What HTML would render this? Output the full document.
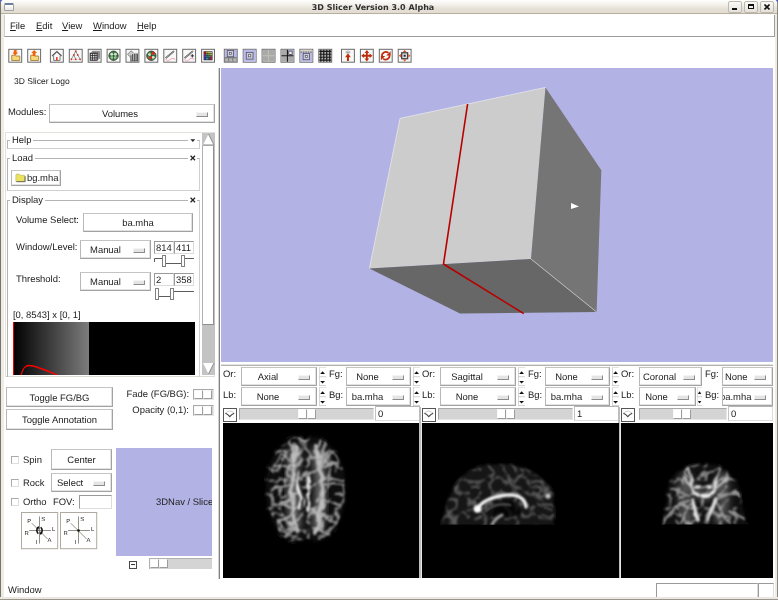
<!DOCTYPE html><html><head><meta charset="utf-8"><title>3D Slicer Version 3.0 Alpha</title><style>
*{box-sizing:border-box;margin:0;padding:0}
html,body{width:778px;height:600px;overflow:hidden;background:#fff}
body{font-family:"Liberation Sans",sans-serif;font-size:9.45px;color:#1a1a1a;position:relative;text-rendering:geometricPrecision}
.a{position:absolute}
.t{position:absolute;white-space:nowrap;line-height:12px;margin-top:1px}
.btn{position:absolute;background:#fff;border:1px solid #c4c4c4;border-left-color:#b8b8b8;border-right-color:#a2a2a2;border-bottom-color:#a2a2a2;box-shadow:inset -1px -1px 0 #e2e2e2;text-align:center;white-space:nowrap;overflow:hidden;padding-top:1px}
.ind{position:absolute;width:12px;height:5px;background:#e4e4e4;border:1px solid #f4f4f4;border-right-color:#8c8c8c;border-bottom-color:#8c8c8c}
.ent{position:absolute;background:#fff;border:1px solid #9a9a9a;border-right-color:#dcdcdc;border-bottom-color:#dcdcdc;white-space:nowrap;overflow:hidden;padding-top:1px}
.tb{position:absolute;top:49px;width:14px;height:14px;border:1px solid #666;background:#f4f4f4;overflow:hidden}
.trough{position:absolute;background:#d4d4d4;border:1px solid #a8a8a8;border-right-color:#e6e6e6;border-bottom-color:#e6e6e6}
.thumb{position:absolute;background:#fff;border:1px solid #f8f8f8;border-right-color:#9c9c9c;border-bottom-color:#9c9c9c}
.lf{position:absolute;border:1px solid #b4b4b4;border-right-color:#d0d0d0;border-bottom-color:#d0d0d0}
.lfl{position:absolute;background:#fff;padding:1px 2px 0;line-height:12px}
.cb{position:absolute;width:8px;height:8px;background:#fff;border:1px solid #aaa;border-right-color:#dedede;border-bottom-color:#dedede}
</style></head><body><div id="root" style="position:absolute;left:0;top:0;width:778px;height:600px;will-change:transform">
<div class="a" style="left:0;top:0;width:778px;height:14px;background:linear-gradient(#fefefd 0,#f4f1ec 35%,#e7e2d9 62%,#e1dbd0 100%);border-bottom:1px solid #b7ae9f"></div>
<div class="a" style="left:0;top:0;width:1px;height:600px;background:#77756f"></div>
<div class="a" style="left:1px;top:14px;width:3px;height:586px;background:#efebe5"></div>
<div class="a" style="left:775px;top:14px;width:3px;height:586px;background:#efebe5"></div>
<div class="a" style="left:777px;top:0;width:1px;height:600px;background:#8a877f"></div>
<div class="a" style="left:0;top:597px;width:778px;height:3px;background:#ece8e1"></div>
<div class="a" style="left:0;top:599px;width:778px;height:1px;background:#9a968d"></div>
<svg class="a" style="left:0;top:0" width="778" height="4"><path d="M0 0h2.400L0 3z" fill="#5a66c6"/><path d="M778 0h-2.400L778 3z" fill="#5a66c6"/></svg>
<div class="t" style="left:0;width:746px;top:0.5px;text-align:center;font-family:'DejaVu Sans',sans-serif;font-weight:bold;font-size:8px;letter-spacing:0;color:#303030">3D Slicer Version 3.0 Alpha</div>
<div class="a" style="left:4px;top:3px;width:10px;height:8px;border:1px solid #a2a2a2;border-top:2px solid #6a7f9c;background:linear-gradient(#fff,#e8e8e8);border-radius:1.500px"></div>
<div class="a" style="left:728px;top:1px;width:14px;height:12px;border:1px solid #bdb8ad;border-radius:2px;background:linear-gradient(#fbfaf8,#e6e2da)"></div>
<div class="a" style="left:744px;top:1px;width:14px;height:12px;border:1px solid #bdb8ad;border-radius:2px;background:linear-gradient(#fbfaf8,#e6e2da)"></div>
<div class="a" style="left:760px;top:1px;width:14px;height:12px;border:1px solid #bdb8ad;border-radius:2px;background:linear-gradient(#fbfaf8,#e6e2da)"></div>
<div class="a" style="left:732px;top:8px;width:5px;height:2px;background:#111"></div>
<div class="a" style="left:748px;top:4px;width:6px;height:5px;border:1px solid #111;border-top-width:2px"></div>
<svg class="a" style="left:764px;top:4px" width="6" height="6" viewBox="0 0 6 6"><path d="M0.5 0.5L5.5 5.5M5.5 0.5L0.5 5.5" stroke="#111" stroke-width="1.6"/></svg>
<div class="a" style="left:4px;top:15px;width:771px;height:22px;background:#fff;border-left:1px solid #d0d0d0;border-right:1px solid #9c9c9c;border-bottom:1px solid #9c9c9c"></div>
<div class="t" style="left:10px;top:20px"><u>F</u>ile</div>
<div class="t" style="left:36px;top:20px"><u>E</u>dit</div>
<div class="t" style="left:62px;top:20px"><u>V</u>iew</div>
<div class="t" style="left:93px;top:20px"><u>W</u>indow</div>
<div class="t" style="left:137px;top:20px"><u>H</u>elp</div>
<svg class="a" style="left:0;top:44px" width="420" height="24" viewBox="0 0 420 24"><g transform="translate(8.30,4.8)"><rect x=".5" y=".5" width="12.900" height="12.900" fill="#f8f8f8" stroke="#6a6a6a" stroke-width="1"/><g transform="translate(1,1) scale(0.992)"><path d="M2.500 5.500h3l.8.800h4.200v4.500h-8z" fill="#f6d87c" stroke="#b08a3c" stroke-width="1"/><path d="M4.600 0.300h2.800v2.500h1.400L6 5.900 3.200 2.800h1.400z" fill="#f0640c"/></g></g><g transform="translate(27.20,4.8)"><rect x=".5" y=".5" width="12.900" height="12.900" fill="#f8f8f8" stroke="#6a6a6a" stroke-width="1"/><g transform="translate(1,1) scale(0.992)"><path d="M2.500 5.500h3l.8.800h4.200v4.500h-8z" fill="#f6d87c" stroke="#b08a3c" stroke-width="1"/><path d="M6 0.200L8.900 3.300H7.400v3H4.600v-3H3.100z" fill="#f0640c"/></g></g><g transform="translate(49.90,4.8)"><rect x=".5" y=".5" width="12.900" height="12.900" fill="#f8f8f8" stroke="#6a6a6a" stroke-width="1"/><g transform="translate(1,1) scale(0.992)"><path d="M1.300 6.200L6 1.800l4.700 4.400" stroke="#555" stroke-width="1.300" fill="none"/><path d="M2.800 6v4.700h6.400V6" stroke="#777" stroke-width="1" fill="#fff"/><rect x="5.200" y="7.300" width="1.600" height="3.400" fill="#e8381c"/></g></g><g transform="translate(68.80,4.8)"><rect x=".5" y=".5" width="12.900" height="12.900" fill="#f8f8f8" stroke="#6a6a6a" stroke-width="1"/><g transform="translate(1,1) scale(0.992)"><path d="M6 1.400L4 5.200M6 1.400l2 3.800M4 5.200L1.600 9.400M4 5.200l2 4.200M8 5.200l2.400 4.200" stroke="#666" stroke-width=".7"/><path d="M1.600 9.600h8.800" stroke="#c8382a" stroke-width=".5" stroke-dasharray=".8 .8"/><circle cx="6" cy="1.4" r=".9" fill="#c8382a"/><circle cx="4" cy="5.2" r=".9" fill="#c8382a"/><circle cx="8" cy="5.2" r=".9" fill="#c8382a"/><circle cx="1.6" cy="9.6" r=".9" fill="#c8382a"/><circle cx="6" cy="9.6" r=".9" fill="#c8382a"/><circle cx="10.4" cy="9.6" r=".9" fill="#c8382a"/></g></g><g transform="translate(87.70,4.8)"><rect x=".5" y=".5" width="12.900" height="12.900" fill="#f8f8f8" stroke="#6a6a6a" stroke-width="1"/><g transform="translate(1,1) scale(0.992)"><path d="M3.500 1h8v8l-3 1.500v-6.500h-6.500z" fill="#9a9a9a"/><path d="M5 1.500v2M7 1.500v2M9 1.500v2M10.500 3v5" stroke="#666" stroke-width=".6"/><rect x="1.500" y="3.500" width="7" height="7" fill="#e8e8e8" stroke="#222" stroke-width="1"/><path d="M3.800 3.500v7M6.200 3.500v7M1.500 5.800h7M1.500 8.200h7" stroke="#222" stroke-width=".8"/></g></g><g transform="translate(106.60,4.8)"><rect x=".5" y=".5" width="12.900" height="12.900" fill="#f8f8f8" stroke="#6a6a6a" stroke-width="1"/><g transform="translate(1,1) scale(0.992)"><circle cx="6" cy="6" r="4.700" fill="#4f8f4f" stroke="#3a3a3a" stroke-width=".9"/><path d="M1.500 6h9M6 1.500v9" stroke="#2a4a2a" stroke-width=".7"/><circle cx="4.200" cy="4.600" r="1.500" fill="#cfe6cf"/><circle cx="7.800" cy="4.600" r="1.500" fill="#cfe6cf"/><circle cx="4.400" cy="7.800" r="1.200" fill="#9cc69c"/><circle cx="7.600" cy="7.800" r="1.200" fill="#9cc69c"/></g></g><g transform="translate(125.50,4.8)"><rect x=".5" y=".5" width="12.900" height="12.900" fill="#f8f8f8" stroke="#6a6a6a" stroke-width="1"/><g transform="translate(1,1) scale(0.992)"><path d="M1 4.500L4.500 1l3 2.500-3.500 4z" fill="#c8c8c8" stroke="#666" stroke-width=".7"/><path d="M3 7l3.500-4h4.500v8.500h-6z" fill="#dcdcdc"/><path d="M4.500 5.500v5.500M6.200 4.200v7M7.900 3.800v7.400M9.600 3.800v7.400M11 3.800v7.400" stroke="#3c3c3c" stroke-width=".95"/><path d="M3.500 11.300h8" stroke="#3c3c3c" stroke-width=".8"/></g></g><g transform="translate(144.40,4.8)"><rect x=".5" y=".5" width="12.900" height="12.900" fill="#f8f8f8" stroke="#6a6a6a" stroke-width="1"/><g transform="translate(1,1) scale(0.992)"><circle cx="6" cy="6" r="4.700" fill="#4f8f4f" stroke="#3a3a3a" stroke-width=".9"/><path d="M1.500 6h9M6 1.500v9" stroke="#2a4a2a" stroke-width=".7"/><circle cx="4.200" cy="4.800" r="1.400" fill="#cfe6cf"/><circle cx="7.800" cy="7.600" r="1.400" fill="#cfe6cf"/><circle cx="7.900" cy="3.600" r="1.500" fill="#ee1c1c"/><circle cx="5" cy="8" r="1.500" fill="#ee1c1c"/></g></g><g transform="translate(163.30,4.8)"><rect x=".5" y=".5" width="12.900" height="12.900" fill="#f8f8f8" stroke="#6a6a6a" stroke-width="1"/><g transform="translate(1,1) scale(0.992)"><path d="M1.400 8.300L9.800 1.400" stroke="#4a4a4a" stroke-width="1.700"/><path d="M1.700 8.100L9.600 1.600" stroke="#dcdcdc" stroke-width=".6"/><path d="M1.500 9.500c1.500 2.500 3 2 4.500 0.300s3-1 5 -0.300" stroke="#f08aa0" stroke-width=".9" fill="none"/></g></g><g transform="translate(182.20,4.8)"><rect x=".5" y=".5" width="12.900" height="12.900" fill="#f8f8f8" stroke="#6a6a6a" stroke-width="1"/><g transform="translate(1,1) scale(0.992)"><path d="M1.400 8.300L9.800 1.400" stroke="#4a4a4a" stroke-width="1.700"/><path d="M1.700 8.100L9.600 1.600" stroke="#dcdcdc" stroke-width=".6"/><path d="M1.500 9.500c1.500 2.500 3 2 4.500 0.300s3-1 5 -0.300" stroke="#f08aa0" stroke-width=".9" fill="none"/><path d="M9.200 4.400v3.400M7.500 6.100h3.400" stroke="#222" stroke-width=".9"/></g></g><g transform="translate(201.10,4.8)"><rect x=".5" y=".5" width="12.900" height="12.900" fill="#f8f8f8" stroke="#6a6a6a" stroke-width="1"/><g transform="translate(1,1) scale(0.992)"><rect x="1.500" y="1.500" width="9" height="9" fill="#2a2a2a"/><rect x="2.00" y="2.00" width="1.700" height="1.600" fill="#d01010"/><rect x="4.05" y="2.00" width="1.700" height="1.600" fill="#d8a020"/><rect x="6.10" y="2.00" width="1.700" height="1.600" fill="#d8d040"/><rect x="8.15" y="2.00" width="1.700" height="1.600" fill="#c8c8c8"/><rect x="2.00" y="4.05" width="1.700" height="1.600" fill="#b020b0"/><rect x="4.05" y="4.05" width="1.700" height="1.600" fill="#30a060"/><rect x="6.10" y="4.05" width="1.700" height="1.600" fill="#60b040"/><rect x="8.15" y="4.05" width="1.700" height="1.600" fill="#d8b040"/><rect x="2.00" y="6.10" width="1.700" height="1.600" fill="#7030c0"/><rect x="4.05" y="6.10" width="1.700" height="1.600" fill="#208888"/><rect x="6.10" y="6.10" width="1.700" height="1.600" fill="#2090a0"/><rect x="8.15" y="6.10" width="1.700" height="1.600" fill="#c04040"/><rect x="2.00" y="8.15" width="1.700" height="1.600" fill="#3040c0"/><rect x="4.05" y="8.15" width="1.700" height="1.600" fill="#40a0c0"/><rect x="6.10" y="8.15" width="1.700" height="1.600" fill="#505050"/><rect x="8.15" y="8.15" width="1.700" height="1.600" fill="#c02060"/></g></g><g transform="translate(223.80,4.8)"><rect x=".5" y=".5" width="12.900" height="12.900" fill="#f8f8f8" stroke="#6a6a6a" stroke-width="1"/><g transform="translate(1,1) scale(0.992)"><rect width="12" height="12" fill="#6a6a6a"/><rect x="0" y="0" width="12" height="7.500" fill="#b9b9ea"/><rect x="2.5" y="0.6" width="6.4" height="6.4" fill="#c9c9e4" stroke="#555" stroke-width=".8"/><rect x="4.6" y="2.6" width="2.2" height="2.2" fill="#eee" stroke="#555" stroke-width=".7"/><rect x="0.300" y="8.500" width="3.300" height="3.200" fill="#b4b4b4"/><rect x="4.400" y="8.500" width="3.300" height="3.200" fill="#b4b4b4"/><rect x="8.500" y="8.500" width="3.300" height="3.200" fill="#b4b4b4"/></g></g><g transform="translate(242.70,4.8)"><rect x=".5" y=".5" width="12.900" height="12.900" fill="#f8f8f8" stroke="#6a6a6a" stroke-width="1"/><g transform="translate(1,1) scale(0.992)"><rect width="12" height="12" fill="#b9b9ea"/><rect x="2.6" y="2.6" width="6.8" height="6.8" fill="#c9c9e4" stroke="#555" stroke-width=".8"/><rect x="4.9" y="4.9" width="2.2" height="2.2" fill="#eee" stroke="#555" stroke-width=".7"/></g></g><g transform="translate(261.60,4.8)"><rect x=".5" y=".5" width="12.900" height="12.900" fill="#f8f8f8" stroke="#6a6a6a" stroke-width="1"/><g transform="translate(1,1) scale(0.992)"><rect width="12" height="12" fill="#a9a9a9"/><path d="M6 0v12M0 6h12" stroke="#c6c6b4" stroke-width=".9"/></g></g><g transform="translate(280.50,4.8)"><rect x=".5" y=".5" width="12.900" height="12.900" fill="#f8f8f8" stroke="#6a6a6a" stroke-width="1"/><g transform="translate(1,1) scale(0.992)"><rect width="12" height="12" fill="#aaa"/><rect x="6" y="0" width="6" height="6" fill="#b9b9ea"/><rect x="7.300" y="1.300" width="3.400" height="3.400" fill="#eee" stroke="#444" stroke-width=".8"/><path d="M6 0v12M0 6h12" stroke="#1a1a1a" stroke-width="1.100"/></g></g><g transform="translate(299.40,4.8)"><rect x=".5" y=".5" width="12.900" height="12.900" fill="#f8f8f8" stroke="#6a6a6a" stroke-width="1"/><g transform="translate(1,1) scale(0.992)"><rect width="12" height="12" fill="#b9b9ea"/><rect x="0" y="0" width="12" height="2" fill="#d8d4c0"/><path d="M0 2.300h12" stroke="#444" stroke-width=".8" stroke-dasharray="1.500 1"/><rect x="2.8" y="3.6" width="6.4" height="6.4" fill="#c9c9e4" stroke="#555" stroke-width=".8"/><rect x="4.9" y="5.7" width="2.2" height="2.2" fill="#eee" stroke="#555" stroke-width=".7"/></g></g><g transform="translate(318.30,4.8)"><rect x=".5" y=".5" width="12.900" height="12.900" fill="#f8f8f8" stroke="#6a6a6a" stroke-width="1"/><g transform="translate(1,1) scale(0.992)"><rect width="12" height="12" fill="#b0b0b0"/><path d="M1.500 0v12M4.500 0v12M7.500 0v12M10.500 0v12M0 1.500h12M0 4.500h12M0 7.500h12M0 10.500h12" stroke="#1c1c1c" stroke-width="1.200"/></g></g><g transform="translate(341.00,4.8)"><rect x=".5" y=".5" width="12.900" height="12.900" fill="#f8f8f8" stroke="#6a6a6a" stroke-width="1"/><g transform="translate(1,1) scale(0.992)"><path d="M6 3.600L8.900 7.400H7v4H5v-4H3.100z" fill="#bf2c0a"/><path d="M6 .4v2.600M3.800 1.200l1.400 1.600M8.200 1.200L6.800 2.800M3.600 3h4.800" stroke="#777" stroke-width=".6"/></g></g><g transform="translate(359.90,4.8)"><rect x=".5" y=".5" width="12.900" height="12.900" fill="#f8f8f8" stroke="#6a6a6a" stroke-width="1"/><g transform="translate(1,1) scale(0.992)"><path d="M6 2v8M2 6h8" stroke="#bf2c0a" stroke-width="1.800"/><path d="M6 .3L3.700 3.200h4.600zM6 11.700L3.700 8.800h4.600zM.3 6l2.900-2.300v4.600zM11.700 6L8.800 3.700v4.600z" fill="#bf2c0a"/></g></g><g transform="translate(378.80,4.8)"><rect x=".5" y=".5" width="12.900" height="12.900" fill="#f8f8f8" stroke="#6a6a6a" stroke-width="1"/><g transform="translate(1,1) scale(0.992)"><path d="M2.300 6.800A3.800 3.800 0 0 1 8.600 3.200M9.700 5.200A3.800 3.800 0 0 1 3.400 8.800" stroke="#bf2c0a" stroke-width="1.700" fill="none"/><path d="M10.900 1.400v4.400H6.500zM1.100 10.600V6.200h4.400z" fill="#bf2c0a"/></g></g><g transform="translate(397.70,4.8)"><rect x=".5" y=".5" width="12.900" height="12.900" fill="#f8f8f8" stroke="#6a6a6a" stroke-width="1"/><g transform="translate(1,1) scale(0.992)"><rect x="3" y="3" width="6" height="6" fill="#e0e0e0" stroke="#444" stroke-width="1.300"/><rect x="5" y="5" width="2" height="2" fill="#222"/><path d="M6 .2L4.200 2.200h3.600zM6 11.800L4.200 9.800h3.600zM.2 6l2-1.800v3.600zM11.800 6l-2-1.800v3.600z" fill="#e0401c"/></g></g></svg>
<div class="t" style="left:14px;top:74px;font-size:8.500px">3D Slicer Logo</div>
<div class="t" style="left:8px;top:106px">Modules:</div>
<div class="btn" style="left:49px;top:104px;width:166px;height:19px;line-height:17px;padding-right:24px">Volumes</div><div class="ind" style="left:196px;top:112px"></div>
<div class="a" style="left:5px;top:132px;width:210px;height:245px;border:1px solid #e4e1dc;border-bottom-color:#dddad4"></div>
<div class="a" style="left:202px;top:133px;width:13px;height:242px;background:#c3c3c3"></div>
<div class="a" style="left:202px;top:146px;width:12px;height:179px;background:#fff;border-left:1px solid #b0b0b0;border-right:1px solid #8e8e8e;border-bottom:1px solid #8e8e8e"></div>
<svg class="a" style="left:202px;top:133px" width="13" height="13" viewBox="0 0 13 13"><rect width="13" height="13" fill="#c3c3c3"/><path d="M6.500 1L1 12h11z" fill="#fff"/><path d="M6.500 1L12 12H1" stroke="#8a8a8a" fill="none" stroke-width="1"/></svg>
<svg class="a" style="left:202px;top:362px" width="13" height="13" viewBox="0 0 13 13"><rect width="13" height="13" fill="#c3c3c3"/><path d="M6.500 12L1 1h11z" fill="#fff"/><path d="M12 1L6.500 12" stroke="#8a8a8a" fill="none" stroke-width="1"/></svg>
<div class="lf" style="left:7px;top:140px;width:193px;height:9px"></div><div class="lfl" style="left:10px;top:134px">Help</div>
<div class="lfl" style="left:188px;top:135px;width:9px;height:10px"></div><svg class="a" style="left:190px;top:139px" width="6" height="4"><path d="M0.400 0.200h4.800L2.800 2.900z" fill="#222"/></svg>
<div class="lf" style="left:7px;top:158px;width:193px;height:33px"></div><div class="lfl" style="left:10px;top:152px">Load</div>
<div class="lfl" style="left:188px;top:153px;width:9px;height:10px"></div><svg class="a" style="left:190px;top:155px" width="6" height="6"><path d="M0.600 0.800l4.400 4.400M5 0.800l-4.400 4.400" stroke="#222" stroke-width="1.250"/></svg>
<div class="btn" style="left:11px;top:170px;width:50px;height:16px"></div>
<svg class="a" style="left:15px;top:173px" width="11" height="10" viewBox="0 0 11 10"><path d="M0.900 2q0-.9.900-.9h2.300l1 1.200h3.900q.9 0 .9.900v5.300h-9z" fill="#ebe35e" stroke="#b4ae62" stroke-width=".6"/><path d="M10.100 3.200v5.500H1.500" stroke="#5a5a50" stroke-width=".9" fill="none"/></svg>
<div class="t" style="left:27px;top:172px">bg.mha</div>
<div class="lf" style="left:7px;top:200px;width:193px;height:180px;border-bottom:none"></div><div class="lfl" style="left:10px;top:194px">Display</div>
<div class="lfl" style="left:188px;top:195px;width:9px;height:10px"></div><svg class="a" style="left:190px;top:197px" width="6" height="6"><path d="M0.600 0.800l4.400 4.400M5 0.800l-4.400 4.400" stroke="#222" stroke-width="1.250"/></svg>
<div class="t" style="left:16px;top:214px">Volume Select:</div>
<div class="btn" style="left:83px;top:213px;width:110px;height:19px;line-height:17px">ba.mha</div>
<div class="t" style="left:16px;top:241px">Window/Level:</div>
<div class="btn" style="left:80px;top:240px;width:71px;height:19px;line-height:17px;padding-right:20px">Manual</div><div class="ind" style="left:133px;top:248px"></div>
<div class="ent" style="left:154px;top:241px;width:20px;height:13px;line-height:11px;padding-left:1px">814</div><div class="ent" style="left:174px;top:241px;width:20px;height:13px;line-height:11px;padding-left:1px">411</div>
<svg class="a" style="left:153px;top:254px" width="42" height="14" viewBox="0 0 42 14"><path d="M1.500 8V4.500H9M13 9.500h15M32 4.500h9" stroke="#4a4a4a" fill="none" stroke-width=".9"/><rect x="9.500" y="1.500" width="3" height="11" fill="#fff" stroke="#808080" stroke-width="1"/><rect x="28.500" y="1.500" width="3" height="11" fill="#fff" stroke="#808080" stroke-width="1"/></svg>
<div class="t" style="left:16px;top:273px">Threshold:</div>
<div class="btn" style="left:80px;top:272px;width:71px;height:19px;line-height:17px;padding-right:20px">Manual</div><div class="ind" style="left:133px;top:280px"></div>
<div class="ent" style="left:154px;top:273px;width:20px;height:13px;line-height:11px;padding-left:1px;text-align:left">2</div><div class="ent" style="left:174px;top:273px;width:20px;height:13px;line-height:11px;padding-left:1px">358</div>
<svg class="a" style="left:153px;top:287px" width="42" height="14" viewBox="0 0 42 14"><path d="M6 9.500h11M21 4.500h20" stroke="#4a4a4a" fill="none" stroke-width=".9"/><rect x="2.500" y="1.500" width="3" height="11" fill="#fff" stroke="#808080" stroke-width="1"/><rect x="17.500" y="1.500" width="3" height="11" fill="#fff" stroke="#808080" stroke-width="1"/></svg>
<div class="t" style="left:13px;top:309px">[0, 8543] x [0, 1]</div>
<div class="a" style="left:13px;top:322px;width:182px;height:53px;background:#000"></div>
<div class="a" style="left:13px;top:322px;width:76px;height:53px;background:linear-gradient(90deg,#000,#7c7c7c)"></div>
<svg class="a" style="left:13px;top:322px" width="182" height="53" viewBox="0 0 182 53"><path d="M0.500 0v53" stroke="#e00" stroke-width="1.200"/><path d="M8 53C10 46 12 43.500 16 43.500S28 46 44 53" stroke="#f00" stroke-width="1.300" fill="none"/></svg>
<div class="a" style="left:4px;top:377px;width:214px;height:7px;background:#fff"></div>
<div class="btn" style="left:6px;top:387px;width:107px;height:20px;line-height:20px">Toggle FG/BG</div>
<div class="btn" style="left:6px;top:409px;width:107px;height:21px;line-height:19px">Toggle Annotation</div>
<div class="t" style="left:100px;width:89px;text-align:right;top:388px">Fade (FG/BG):</div>
<div class="t" style="left:100px;width:89px;text-align:right;top:404px">Opacity (0,1):</div>
<div class="trough" style="left:193px;top:389px;width:21px;height:11px"></div><div class="thumb" style="left:194px;top:390px;width:9px;height:9px"></div><div class="thumb" style="left:203px;top:390px;width:9px;height:9px"></div>
<div class="trough" style="left:193px;top:405px;width:21px;height:11px"></div><div class="thumb" style="left:194px;top:406px;width:9px;height:9px"></div><div class="thumb" style="left:203px;top:406px;width:9px;height:9px"></div>
<div class="cb" style="left:11px;top:456px"></div><div class="t" style="left:23px;top:454px">Spin</div>
<div class="cb" style="left:11px;top:479px"></div><div class="t" style="left:23px;top:477px">Rock</div>
<div class="cb" style="left:11px;top:498px"></div><div class="t" style="left:23px;top:496px">Ortho</div>
<div class="btn" style="left:51px;top:449px;width:61px;height:21px;line-height:19px">Center</div>
<div class="btn" style="left:51px;top:473px;width:61px;height:19px;line-height:17px;text-align:left;padding-left:5px">Select</div><div class="ind" style="left:93px;top:481px"></div>
<div class="t" style="left:53px;top:496px">FOV:</div>
<div class="ent" style="left:79px;top:495px;width:33px;height:14px"></div>
<svg class="a" style="left:21.2px;top:512px" width="38" height="38" viewBox="0 0 38 38"><rect x=".5" y=".5" width="36.200" height="36.200" fill="#fff" stroke="#aeaaa0" stroke-width="1"/><path d="M8 18.500h22M18.500 4.400v27.200M10.800 11.200l15.800 15.800" stroke="#77746a" stroke-width=".8" fill="none"/><path d="M17.300 15.300Q14.300 18.500 17.300 21.700M19.700 15.300Q22.700 18.500 19.700 21.700" stroke="#111" stroke-width="1.500" fill="none"/><path d="M15.200 16.600h3.400l-1.200-2.600zM21.800 20.400h-3.400l1.200 2.600z" fill="#111"/><text x="6.2" y="10.6" font-size="5.900" font-family="Liberation Sans, sans-serif" fill="#222">P</text><text x="20.2" y="9" font-size="5.900" font-family="Liberation Sans, sans-serif" fill="#222">S</text><text x="31" y="19" font-size="5.900" font-family="Liberation Sans, sans-serif" fill="#222">L</text><text x="3.6" y="22.8" font-size="5.900" font-family="Liberation Sans, sans-serif" fill="#222">R</text><text x="14.6" y="31.7" font-size="5.900" font-family="Liberation Sans, sans-serif" fill="#222">I</text><text x="26.5" y="29.7" font-size="5.900" font-family="Liberation Sans, sans-serif" fill="#222">A</text></svg>
<svg class="a" style="left:60.3px;top:512px" width="38" height="38" viewBox="0 0 38 38"><rect x=".5" y=".5" width="36.200" height="36.200" fill="#fff" stroke="#aeaaa0" stroke-width="1"/><path d="M8 18.500h22M18.500 4.400v27.200M10.800 11.200l15.800 15.800" stroke="#77746a" stroke-width=".8" fill="none"/><circle cx="18.500" cy="18.500" r="1.300" fill="#111"/><text x="6.2" y="10.6" font-size="5.900" font-family="Liberation Sans, sans-serif" fill="#222">P</text><text x="20.2" y="9" font-size="5.900" font-family="Liberation Sans, sans-serif" fill="#222">S</text><text x="31" y="19" font-size="5.900" font-family="Liberation Sans, sans-serif" fill="#222">L</text><text x="3.6" y="22.8" font-size="5.900" font-family="Liberation Sans, sans-serif" fill="#222">R</text><text x="14.6" y="31.7" font-size="5.900" font-family="Liberation Sans, sans-serif" fill="#222">I</text><text x="26.5" y="29.7" font-size="5.900" font-family="Liberation Sans, sans-serif" fill="#222">A</text></svg>
<div class="a" style="left:116px;top:448px;width:96px;height:108px;background:#b2b2e5;overflow:hidden"><div class="t" style="left:40px;top:48px;color:#222">3DNav / Slice</div></div>
<div class="a" style="left:129px;top:561px;width:8px;height:8px;border:1px solid #484848;background:#fff"></div><div class="a" style="left:131px;top:564px;width:4px;height:1px;background:#333"></div>
<div class="a" style="left:149px;top:558px;width:63px;height:11px;background:#d4d4d4;border-top:1px solid #b0b0b0;border-left:1px solid #b0b0b0"></div><div class="thumb" style="left:150px;top:559px;width:9px;height:9px"></div><div class="thumb" style="left:159px;top:559px;width:9px;height:9px"></div>
<div class="a" style="left:218px;top:68px;width:1px;height:511px;background:#d4d4d4"></div><div class="a" style="left:219px;top:68px;width:1px;height:511px;background:#808080"></div>
<svg class="a" style="left:221px;top:68px" width="552" height="294" viewBox="0 0 552 294"><rect width="552" height="294" fill="#b2b2e5"/><polygon points="179,50.4 324.5,19.4 310,191 148.4,200.5" fill="#cccccc"/><polygon points="324.5,19.4 380.3,102.2 375.6,244 310,191" fill="#757575"/><polygon points="148.4,200.500 310,191 375.600,244 239,245.600" fill="#676767"/><path d="M148.400 200.500L179 50.400L324.500 19.400" stroke="#ececec" stroke-width=".7" fill="none"/><path d="M310 191L375.600 244" stroke="#c4c4c4" stroke-width=".9" fill="none"/><path d="M246.600 36L222.500 196L302.800 245.600" stroke="#b80000" stroke-width="1.600" fill="none"/><polygon points="350,135 358,138.500 350,141" fill="#fff"/></svg>
<div class="a" style="left:221px;top:364px;width:552px;height:1px;background:#e2e2e2"></div><div class="a" style="left:221px;top:365px;width:552px;height:1px;background:#b2b2b2"></div>
<div class="t" style="left:223px;top:368px">Or:</div><div class="t" style="left:223px;top:389px">Lb:</div><div class="btn" style="left:241px;top:367px;width:76px;height:19px;line-height:17px;padding-right:22px">Axial</div><div class="ind" style="left:298px;top:375px"></div><div class="btn" style="left:241px;top:387px;width:76px;height:19px;line-height:17px;padding-right:22px">None</div><div class="ind" style="left:298px;top:395px"></div><svg class="a" style="left:319px;top:367px" width="7" height="19" viewBox="0 0 7 19" preserveAspectRatio="none"><rect x="0" y="9.200" width="7" height="1" fill="#d2d2d2"/><rect x="-.2" y="0" width=".9" height="19" fill="#c6c6c6"/><rect x="0" y="0" width="7" height=".8" fill="#dcdcdc"/><rect x="0" y="18.200" width="7" height=".8" fill="#c8c8c8"/><path d="M3.600 4.200L6 6.900H1.200z" fill="#111"/><path d="M3.600 16.600L6 13.900H1.200z" fill="#111"/></svg><svg class="a" style="left:319px;top:387px" width="7" height="19" viewBox="0 0 7 19" preserveAspectRatio="none"><rect x="0" y="9.200" width="7" height="1" fill="#d2d2d2"/><rect x="-.2" y="0" width=".9" height="19" fill="#c6c6c6"/><rect x="0" y="0" width="7" height=".8" fill="#dcdcdc"/><rect x="0" y="18.200" width="7" height=".8" fill="#c8c8c8"/><path d="M3.600 4.200L6 6.900H1.200z" fill="#111"/><path d="M3.600 16.600L6 13.900H1.200z" fill="#111"/></svg><div class="t" style="left:329px;top:368px">Fg:</div><div class="t" style="left:329px;top:389px">Bg:</div><div class="btn" style="left:346px;top:367px;width:65px;height:19px;line-height:17px;padding-right:22px">None</div><div class="ind" style="left:392px;top:375px"></div><div class="btn" style="left:346px;top:387px;width:65px;height:19px;line-height:17px;padding-right:22px">ba.mha</div><div class="ind" style="left:392px;top:395px"></div><svg class="a" style="left:413px;top:367px" width="7" height="19" viewBox="0 0 7 19" preserveAspectRatio="none"><rect x="0" y="9.200" width="7" height="1" fill="#d2d2d2"/><rect x="-.2" y="0" width=".9" height="19" fill="#c6c6c6"/><rect x="0" y="0" width="7" height=".8" fill="#dcdcdc"/><rect x="0" y="18.200" width="7" height=".8" fill="#c8c8c8"/><path d="M3.600 4.200L6 6.900H1.200z" fill="#111"/><path d="M3.600 16.600L6 13.900H1.200z" fill="#111"/></svg><svg class="a" style="left:413px;top:387px" width="7" height="19" viewBox="0 0 7 19" preserveAspectRatio="none"><rect x="0" y="9.200" width="7" height="1" fill="#d2d2d2"/><rect x="-.2" y="0" width=".9" height="19" fill="#c6c6c6"/><rect x="0" y="0" width="7" height=".8" fill="#dcdcdc"/><rect x="0" y="18.200" width="7" height=".8" fill="#c8c8c8"/><path d="M3.600 4.200L6 6.900H1.200z" fill="#111"/><path d="M3.600 16.600L6 13.900H1.200z" fill="#111"/></svg><div class="a" style="left:223px;top:408px;width:14px;height:14px;border:1px solid #555;background:#fff"></div><svg class="a" style="left:223px;top:408px" width="14" height="14" viewBox="0 0 14 14"><path d="M2.600 5.200Q6.800 0.800 11 5.200" fill="none" stroke="#c4c4c4" stroke-width=".8"/><path d="M2.400 5.300Q5 6.500 6.800 8.600Q8.600 6.500 11.200 5.300" fill="none" stroke="#444" stroke-width="1.200" stroke-linejoin="round"/><path d="M3.600 9.200l-.8 1M6.800 10.300v1M10 9.200l.8 1" stroke="#d0d0d0" stroke-width=".6"/></svg><div class="trough" style="left:239px;top:408px;width:135px;height:12px"></div><div class="thumb" style="left:298px;top:409px;width:9px;height:10px"></div><div class="thumb" style="left:307px;top:409px;width:9px;height:10px"></div><div class="ent" style="left:375px;top:406px;width:45px;height:15px;line-height:13px;padding-left:2px;border-right:none;border-top-color:#b4b4b4;border-left-color:#c4c4c4">0</div>
<div class="t" style="left:422px;top:368px">Or:</div><div class="t" style="left:422px;top:389px">Lb:</div><div class="btn" style="left:440px;top:367px;width:76px;height:19px;line-height:17px;padding-right:22px">Sagittal</div><div class="ind" style="left:497px;top:375px"></div><div class="btn" style="left:440px;top:387px;width:76px;height:19px;line-height:17px;padding-right:22px">None</div><div class="ind" style="left:497px;top:395px"></div><svg class="a" style="left:518px;top:367px" width="7" height="19" viewBox="0 0 7 19" preserveAspectRatio="none"><rect x="0" y="9.200" width="7" height="1" fill="#d2d2d2"/><rect x="-.2" y="0" width=".9" height="19" fill="#c6c6c6"/><rect x="0" y="0" width="7" height=".8" fill="#dcdcdc"/><rect x="0" y="18.200" width="7" height=".8" fill="#c8c8c8"/><path d="M3.600 4.200L6 6.900H1.200z" fill="#111"/><path d="M3.600 16.600L6 13.900H1.200z" fill="#111"/></svg><svg class="a" style="left:518px;top:387px" width="7" height="19" viewBox="0 0 7 19" preserveAspectRatio="none"><rect x="0" y="9.200" width="7" height="1" fill="#d2d2d2"/><rect x="-.2" y="0" width=".9" height="19" fill="#c6c6c6"/><rect x="0" y="0" width="7" height=".8" fill="#dcdcdc"/><rect x="0" y="18.200" width="7" height=".8" fill="#c8c8c8"/><path d="M3.600 4.200L6 6.900H1.200z" fill="#111"/><path d="M3.600 16.600L6 13.900H1.200z" fill="#111"/></svg><div class="t" style="left:528px;top:368px">Fg:</div><div class="t" style="left:528px;top:389px">Bg:</div><div class="btn" style="left:545px;top:367px;width:65px;height:19px;line-height:17px;padding-right:22px">None</div><div class="ind" style="left:591px;top:375px"></div><div class="btn" style="left:545px;top:387px;width:65px;height:19px;line-height:17px;padding-right:22px">ba.mha</div><div class="ind" style="left:591px;top:395px"></div><svg class="a" style="left:612px;top:367px" width="7" height="19" viewBox="0 0 7 19" preserveAspectRatio="none"><rect x="0" y="9.200" width="7" height="1" fill="#d2d2d2"/><rect x="-.2" y="0" width=".9" height="19" fill="#c6c6c6"/><rect x="0" y="0" width="7" height=".8" fill="#dcdcdc"/><rect x="0" y="18.200" width="7" height=".8" fill="#c8c8c8"/><path d="M3.600 4.200L6 6.900H1.200z" fill="#111"/><path d="M3.600 16.600L6 13.900H1.200z" fill="#111"/></svg><svg class="a" style="left:612px;top:387px" width="7" height="19" viewBox="0 0 7 19" preserveAspectRatio="none"><rect x="0" y="9.200" width="7" height="1" fill="#d2d2d2"/><rect x="-.2" y="0" width=".9" height="19" fill="#c6c6c6"/><rect x="0" y="0" width="7" height=".8" fill="#dcdcdc"/><rect x="0" y="18.200" width="7" height=".8" fill="#c8c8c8"/><path d="M3.600 4.200L6 6.900H1.200z" fill="#111"/><path d="M3.600 16.600L6 13.900H1.200z" fill="#111"/></svg><div class="a" style="left:422px;top:408px;width:14px;height:14px;border:1px solid #555;background:#fff"></div><svg class="a" style="left:422px;top:408px" width="14" height="14" viewBox="0 0 14 14"><path d="M2.600 5.200Q6.800 0.800 11 5.200" fill="none" stroke="#c4c4c4" stroke-width=".8"/><path d="M2.400 5.300Q5 6.500 6.800 8.600Q8.600 6.500 11.200 5.300" fill="none" stroke="#444" stroke-width="1.200" stroke-linejoin="round"/><path d="M3.600 9.200l-.8 1M6.800 10.300v1M10 9.200l.8 1" stroke="#d0d0d0" stroke-width=".6"/></svg><div class="trough" style="left:438px;top:408px;width:135px;height:12px"></div><div class="thumb" style="left:497px;top:409px;width:9px;height:10px"></div><div class="thumb" style="left:506px;top:409px;width:9px;height:10px"></div><div class="ent" style="left:574px;top:406px;width:45px;height:15px;line-height:13px;padding-left:2px;border-right:none;border-top-color:#b4b4b4;border-left-color:#c4c4c4">1</div>
<div class="t" style="left:621px;top:368px">Or:</div><div class="t" style="left:621px;top:389px">Lb:</div><div class="btn" style="left:639px;top:367px;width:63px;height:19px;line-height:17px;text-align:left;padding-left:3px">Coronal</div><div class="ind" style="left:683px;top:375px"></div><div class="btn" style="left:639px;top:387px;width:57px;height:19px;line-height:17px;padding-right:22px">None</div><div class="ind" style="left:677px;top:395px"></div><svg class="a" style="left:697px;top:387px" width="5" height="19" viewBox="0 0 7 19" preserveAspectRatio="none"><rect x="0" y="9.200" width="7" height="1" fill="#d2d2d2"/><rect x="-.2" y="0" width=".9" height="19" fill="#c6c6c6"/><rect x="0" y="0" width="7" height=".8" fill="#dcdcdc"/><rect x="0" y="18.200" width="7" height=".8" fill="#c8c8c8"/><path d="M3.600 4.200L6 6.900H1.200z" fill="#111"/><path d="M3.600 16.600L6 13.900H1.200z" fill="#111"/></svg><div class="t" style="left:705px;top:368px">Fg:</div><div class="t" style="left:705px;top:389px">Bg:</div><div class="btn" style="left:722px;top:367px;width:51px;height:19px;line-height:17px;text-align:left;padding-left:2px">None</div><div class="ind" style="left:754px;top:375px"></div><div class="btn" style="left:722px;top:387px;width:51px;height:19px;line-height:17px;text-align:left;padding-left:0px"><span style="margin-left:-3px">ba.mha</span></div><div class="ind" style="left:754px;top:395px"></div><div class="a" style="left:621px;top:408px;width:14px;height:14px;border:1px solid #555;background:#fff"></div><svg class="a" style="left:621px;top:408px" width="14" height="14" viewBox="0 0 14 14"><path d="M2.600 5.200Q6.800 0.800 11 5.200" fill="none" stroke="#c4c4c4" stroke-width=".8"/><path d="M2.400 5.300Q5 6.500 6.800 8.600Q8.600 6.500 11.200 5.300" fill="none" stroke="#444" stroke-width="1.200" stroke-linejoin="round"/><path d="M3.600 9.200l-.8 1M6.800 10.300v1M10 9.200l.8 1" stroke="#d0d0d0" stroke-width=".6"/></svg><div class="trough" style="left:639px;top:408px;width:88px;height:12px"></div><div class="thumb" style="left:673px;top:409px;width:9px;height:10px"></div><div class="thumb" style="left:682px;top:409px;width:9px;height:10px"></div><div class="ent" style="left:728px;top:406px;width:45px;height:15px;line-height:13px;padding-left:2px;border-top-color:#b4b4b4;border-left-color:#c4c4c4">0</div>
<div class="a" style="left:419px;top:407px;width:2px;height:171px;background:#bdbdbd"></div><div class="a" style="left:421px;top:423px;width:1px;height:155px;background:#e6e6e6"></div><div class="a" style="left:618px;top:407px;width:2px;height:171px;background:#bdbdbd"></div><div class="a" style="left:620px;top:423px;width:1px;height:155px;background:#e6e6e6"></div>
<svg class="a" width="0" height="0" style="left:0;top:0"><defs><filter id="tex" x="0" y="0" width="100%" height="100%" color-interpolation-filters="sRGB"><feTurbulence type="turbulence" baseFrequency="0.07" numOctaves="2" seed="11" result="n"/><feColorMatrix in="n" type="matrix" values="0 0 0 0 1  0 0 0 0 1  0 0 0 0 1  -6 0 0 0 1.2"/><feGaussianBlur stdDeviation="0.8"/></filter><filter id="tex2" x="0" y="0" width="100%" height="100%" color-interpolation-filters="sRGB"><feTurbulence type="turbulence" baseFrequency="0.085" numOctaves="2" seed="5" result="n"/><feColorMatrix in="n" type="matrix" values="0 0 0 0 1  0 0 0 0 1  0 0 0 0 1  -5 0 0 0 1.3"/><feGaussianBlur stdDeviation="0.9"/></filter><filter id="wig" x="-20%" y="-20%" width="140%" height="140%" color-interpolation-filters="sRGB"><feTurbulence type="fractalNoise" baseFrequency="0.07" numOctaves="2" seed="2" result="n"/><feDisplacementMap in="SourceGraphic" in2="n" scale="8" xChannelSelector="R" yChannelSelector="G"/><feGaussianBlur stdDeviation="0.8"/></filter><filter id="b3" x="-30%" y="-30%" width="160%" height="160%"><feGaussianBlur stdDeviation="3.5"/></filter><filter id="wig2" x="-20%" y="-20%" width="140%" height="140%" color-interpolation-filters="sRGB"><feTurbulence type="fractalNoise" baseFrequency="0.08" numOctaves="2" seed="9" result="n"/><feDisplacementMap in="SourceGraphic" in2="n" scale="3.500" xChannelSelector="R" yChannelSelector="G"/><feGaussianBlur stdDeviation="0.9"/></filter><filter id="b1" x="-20%" y="-20%" width="140%" height="140%"><feGaussianBlur stdDeviation="0.9"/></filter><filter id="b2" x="-20%" y="-20%" width="140%" height="140%"><feGaussianBlur stdDeviation="1.2"/></filter></defs></svg>
<svg class="a" style="left:223px;top:423px" width="196" height="155" viewBox="0 0 196 155"><rect width="196" height="155" fill="#000"/><clipPath id="cax"><path d="M82.2 15.0C84.7 15.0 88.2 11.2 92.0 11.7C95.8 12.2 101.0 15.1 105.0 18.2C109.0 21.3 112.9 25.7 115.8 30.2C118.7 34.7 120.9 39.9 122.3 45.3C123.7 50.7 124.2 56.8 124.4 62.6C124.6 68.4 124.3 74.2 123.4 80.0C122.5 85.8 121.3 91.9 119.0 97.3C116.7 102.7 113.1 108.6 109.3 112.4C105.5 116.2 100.6 119.1 96.3 120.0C92.0 120.9 87.6 117.8 83.3 117.9C79.0 118.0 74.6 121.2 70.3 120.7C66.0 120.2 61.1 118.1 57.3 114.6C53.5 111.0 50.1 105.2 47.6 99.4C45.1 93.6 43.3 86.1 42.2 80.0C41.1 73.9 40.9 68.4 41.1 62.6C41.3 56.8 41.9 50.3 43.2 45.3C44.5 40.2 46.4 36.4 48.7 32.3C51.1 28.1 54.1 23.6 57.3 20.4C60.5 17.1 64.8 14.2 68.1 12.8C71.3 11.4 74.4 11.3 76.8 11.7C79.2 12.1 79.7 15.0 82.2 15.0Z"/></clipPath><g clip-path="url(#cax)"><path d="M82.2 15.0C84.7 15.0 88.2 11.2 92.0 11.7C95.8 12.2 101.0 15.1 105.0 18.2C109.0 21.3 112.9 25.7 115.8 30.2C118.7 34.7 120.9 39.9 122.3 45.3C123.7 50.7 124.2 56.8 124.4 62.6C124.6 68.4 124.3 74.2 123.4 80.0C122.5 85.8 121.3 91.9 119.0 97.3C116.7 102.7 113.1 108.6 109.3 112.4C105.5 116.2 100.6 119.1 96.3 120.0C92.0 120.9 87.6 117.8 83.3 117.9C79.0 118.0 74.6 121.2 70.3 120.7C66.0 120.2 61.1 118.1 57.3 114.6C53.5 111.0 50.1 105.2 47.6 99.4C45.1 93.6 43.3 86.1 42.2 80.0C41.1 73.9 40.9 68.4 41.1 62.6C41.3 56.8 41.9 50.3 43.2 45.3C44.5 40.2 46.4 36.4 48.7 32.3C51.1 28.1 54.1 23.6 57.3 20.4C60.5 17.1 64.8 14.2 68.1 12.8C71.3 11.4 74.4 11.3 76.8 11.7C79.2 12.1 79.7 15.0 82.2 15.0Z" fill="#0e0e0e"/><path d="M72 26C69 50 68 80 73 106M93 25C98 50 99 80 94 106" stroke="#6a6a6a" stroke-width="11" fill="none" filter="url(#b3)"/><rect x="30" y="4" width="104" height="124" filter="url(#tex)" opacity=".65"/><g filter="url(#wig)" fill="none" stroke-linecap="round"><path d="M73 24C71 38 69 52 69 67S70 94 74 108" stroke="#bdbdbd" stroke-width="4"/><path d="M92 23C96 38 99 52 99.500 67S98 94 94 108" stroke="#bdbdbd" stroke-width="4"/><path d="M76 50C75 60 75 70 76 84M86 54C85 64 85 76 85 88" stroke="#f4f4f4" stroke-width="2.400"/><path d="M71 40L58 30M70 46L52 42M69 60L48 66M69 74L50 84M71 90L54 100M73 104L62 114M72 28L66 18" stroke="#a8a8a8" stroke-width="2.200"/><path d="M95 38L108 28M97 46L114 40M99 60L119 62M99 74L118 82M98 90L113 100M95 104L106 114M93 27L98 17" stroke="#a8a8a8" stroke-width="2.200"/><path d="M48 66C46 72 48 80 52 84M58 30C52 36 50 44 52 50M119 62C121 70 120 78 116 84M108 28C114 34 116 42 114 48M54 100C58 108 64 112 70 114M113 100C108 108 102 112 96 114" stroke="#808080" stroke-width="1.800"/></g><path d="M82 10V34M82 100v22" stroke="#000" stroke-width="2" filter="url(#b1)"/><path d="M82.2 15.0C84.7 15.0 88.2 11.2 92.0 11.7C95.8 12.2 101.0 15.1 105.0 18.2C109.0 21.3 112.9 25.7 115.8 30.2C118.7 34.7 120.9 39.9 122.3 45.3C123.7 50.7 124.2 56.8 124.4 62.6C124.6 68.4 124.3 74.2 123.4 80.0C122.5 85.8 121.3 91.9 119.0 97.3C116.7 102.7 113.1 108.6 109.3 112.4C105.5 116.2 100.6 119.1 96.3 120.0C92.0 120.9 87.6 117.8 83.3 117.9C79.0 118.0 74.6 121.2 70.3 120.7C66.0 120.2 61.1 118.1 57.3 114.6C53.5 111.0 50.1 105.2 47.6 99.4C45.1 93.6 43.3 86.1 42.2 80.0C41.1 73.9 40.9 68.4 41.1 62.6C41.3 56.8 41.9 50.3 43.2 45.3C44.5 40.2 46.4 36.4 48.7 32.3C51.1 28.1 54.1 23.6 57.3 20.4C60.5 17.1 64.8 14.2 68.1 12.8C71.3 11.4 74.4 11.3 76.8 11.7C79.2 12.1 79.7 15.0 82.2 15.0Z" fill="none" stroke="#000" stroke-width="4" filter="url(#b2)"/></g></svg>
<svg class="a" style="left:422px;top:423px" width="197" height="155" viewBox="0 0 197 155"><rect width="197" height="155" fill="#000"/><clipPath id="csg"><path d="M17.9 101.8C18.0 100.7 18.1 97.9 18.8 95.0C19.6 92.1 21.2 87.8 22.4 84.2C23.6 80.6 24.5 77.0 26.0 73.4C27.5 69.8 29.4 65.9 31.4 62.6C33.4 59.3 35.2 56.2 37.7 53.6C40.2 51.0 43.0 49.4 46.7 47.3C50.5 45.2 54.7 42.2 60.2 41.0C65.8 39.8 74.3 40.1 80.0 40.1C85.7 40.1 89.6 40.0 94.4 41.0C99.2 42.0 104.0 43.7 108.8 46.4C113.6 49.1 119.3 53.6 123.2 57.2C127.1 60.8 130.6 64.4 132.2 68.0C133.8 71.6 132.7 74.9 133.0 78.8C133.3 82.7 134.1 87.6 134.0 91.4C133.9 95.2 132.5 100.1 132.2 101.8Z"/></clipPath><g clip-path="url(#csg)"><path d="M17.9 101.8C18.0 100.7 18.1 97.9 18.8 95.0C19.6 92.1 21.2 87.8 22.4 84.2C23.6 80.6 24.5 77.0 26.0 73.4C27.5 69.8 29.4 65.9 31.4 62.6C33.4 59.3 35.2 56.2 37.7 53.6C40.2 51.0 43.0 49.4 46.7 47.3C50.5 45.2 54.7 42.2 60.2 41.0C65.8 39.8 74.3 40.1 80.0 40.1C85.7 40.1 89.6 40.0 94.4 41.0C99.2 42.0 104.0 43.7 108.8 46.4C113.6 49.1 119.3 53.6 123.2 57.2C127.1 60.8 130.6 64.4 132.2 68.0C133.8 71.6 132.7 74.9 133.0 78.8C133.3 82.7 134.1 87.6 134.0 91.4C133.9 95.2 132.5 100.1 132.2 101.8Z" fill="#161616"/><rect x="10" y="32" width="132" height="74" filter="url(#tex2)" opacity=".3"/><path d="M62 90C68 82 80 77 90 78C97 79 100 84 99 90C92 96 72 98 62 90Z" fill="#000" opacity=".75" filter="url(#b2)"/><g filter="url(#b1)" fill="none" stroke-linecap="round"><path d="M56 85C60 78 72 73 85 72C96 71.500 103 75 104 84" stroke="#f4f4f4" stroke-width="3.300"/><circle cx="55.500" cy="86" r="3.800" fill="#fff" stroke="none"/><path d="M64 88C70 82 80 80 88 82" stroke="#5c5c5c" stroke-width="2.200"/><path d="M70 102C72 97 76 94 80 92" stroke="#a0a0a0" stroke-width="3"/><circle cx="126" cy="73" r="2.800" fill="#c4c4c4" stroke="none"/><path d="M122 84l8 3M120 92l10 4" stroke="#4c4c4c" stroke-width="2"/></g><path d="M17.9 101.8C18.0 100.7 18.1 97.9 18.8 95.0C19.6 92.1 21.2 87.8 22.4 84.2C23.6 80.6 24.5 77.0 26.0 73.4C27.5 69.8 29.4 65.9 31.4 62.6C33.4 59.3 35.2 56.2 37.7 53.6C40.2 51.0 43.0 49.4 46.7 47.3C50.5 45.2 54.7 42.2 60.2 41.0C65.8 39.8 74.3 40.1 80.0 40.1C85.7 40.1 89.6 40.0 94.4 41.0C99.2 42.0 104.0 43.7 108.8 46.4C113.6 49.1 119.3 53.6 123.2 57.2C127.1 60.8 130.6 64.4 132.2 68.0C133.8 71.6 132.7 74.9 133.0 78.8C133.3 82.7 134.1 87.6 134.0 91.4C133.9 95.2 132.5 100.1 132.2 101.8" fill="none" stroke="#000" stroke-width="3" filter="url(#b2)"/></g></svg>
<svg class="a" style="left:621px;top:423px" width="152" height="155" viewBox="0 0 152 155"><rect width="152" height="155" fill="#000"/><clipPath id="cco"><path d="M40.3 101.6C40.4 100.4 40.4 98.0 41.0 94.2C41.6 90.4 43.2 83.7 43.9 78.7C44.6 73.8 44.2 68.8 45.3 64.5C46.3 60.2 47.7 56.4 50.2 53.2C52.7 50.0 56.6 47.5 60.1 45.4C63.6 43.3 67.6 41.4 71.4 40.5C75.2 39.6 78.7 39.8 82.7 39.8C86.7 39.8 91.7 39.5 95.5 40.5C99.3 41.5 102.3 43.8 105.4 46.1C108.5 48.5 111.6 51.5 113.9 54.6C116.2 57.7 118.2 60.5 119.5 64.5C120.8 68.5 120.6 74.2 121.6 78.7C122.5 83.2 124.4 87.6 125.2 91.4C126.0 95.2 126.4 99.9 126.6 101.6Z"/></clipPath><g clip-path="url(#cco)"><path d="M40.3 101.6C40.4 100.4 40.4 98.0 41.0 94.2C41.6 90.4 43.2 83.7 43.9 78.7C44.6 73.8 44.2 68.8 45.3 64.5C46.3 60.2 47.7 56.4 50.2 53.2C52.7 50.0 56.6 47.5 60.1 45.4C63.6 43.3 67.6 41.4 71.4 40.5C75.2 39.6 78.7 39.8 82.7 39.8C86.7 39.8 91.7 39.5 95.5 40.5C99.3 41.5 102.3 43.8 105.4 46.1C108.5 48.5 111.6 51.5 113.9 54.6C116.2 57.7 118.2 60.5 119.5 64.5C120.8 68.5 120.6 74.2 121.6 78.7C122.5 83.2 124.4 87.6 125.2 91.4C126.0 95.2 126.4 99.9 126.6 101.6Z" fill="#101010"/><path d="M66 50C60 70 62 90 70 100M100 50C106 70 104 90 96 100M70 62Q83 84 96 62" stroke="#5a5a5a" stroke-width="9" fill="none" filter="url(#b3)"/><rect x="34" y="34" width="100" height="72" filter="url(#tex)" opacity=".55"/><g filter="url(#wig2)" fill="none" stroke-linecap="round"><path d="M70 56C70 66 74 73 83 73.500S96 66 95 56" stroke="#ededed" stroke-width="2.800"/><path d="M71 60l-4-15M94 60l5-15M72 66L62 54M94 66l12-10" stroke="#c0c0c0" stroke-width="2.200"/><path d="M75 64h3M87 64h3" stroke="#e8e8e8" stroke-width="3"/><path d="M71 76C73 84 75 90 77 97M95 76C92 84 89 90 87 97" stroke="#e0e0e0" stroke-width="3.600"/><path d="M70 76L54 84M68 72L50 66M70 80L60 100M96 76l18-8M97 72l20-2M96 80l12 20M54 84L44 98M114 68l10 10M108 88l16 8" stroke="#9a9a9a" stroke-width="2"/></g><path d="M40.3 101.6C40.4 100.4 40.4 98.0 41.0 94.2C41.6 90.4 43.2 83.7 43.9 78.7C44.6 73.8 44.2 68.8 45.3 64.5C46.3 60.2 47.7 56.4 50.2 53.2C52.7 50.0 56.6 47.5 60.1 45.4C63.6 43.3 67.6 41.4 71.4 40.5C75.2 39.6 78.7 39.8 82.7 39.8C86.7 39.8 91.7 39.5 95.5 40.5C99.3 41.5 102.3 43.8 105.4 46.1C108.5 48.5 111.6 51.5 113.9 54.6C116.2 57.7 118.2 60.5 119.5 64.5C120.8 68.5 120.6 74.2 121.6 78.7C122.5 83.2 124.4 87.6 125.2 91.4C126.0 95.2 126.4 99.9 126.6 101.6" fill="none" stroke="#000" stroke-width="3" filter="url(#b2)"/></g></svg>
<div class="t" style="left:8px;top:584px">Window</div>
<div class="ent" style="left:656px;top:583px;width:102px;height:14px;border-bottom:none"></div><div class="ent" style="left:758px;top:583px;width:16px;height:14px;border-bottom:none"></div>
</div></body></html>
